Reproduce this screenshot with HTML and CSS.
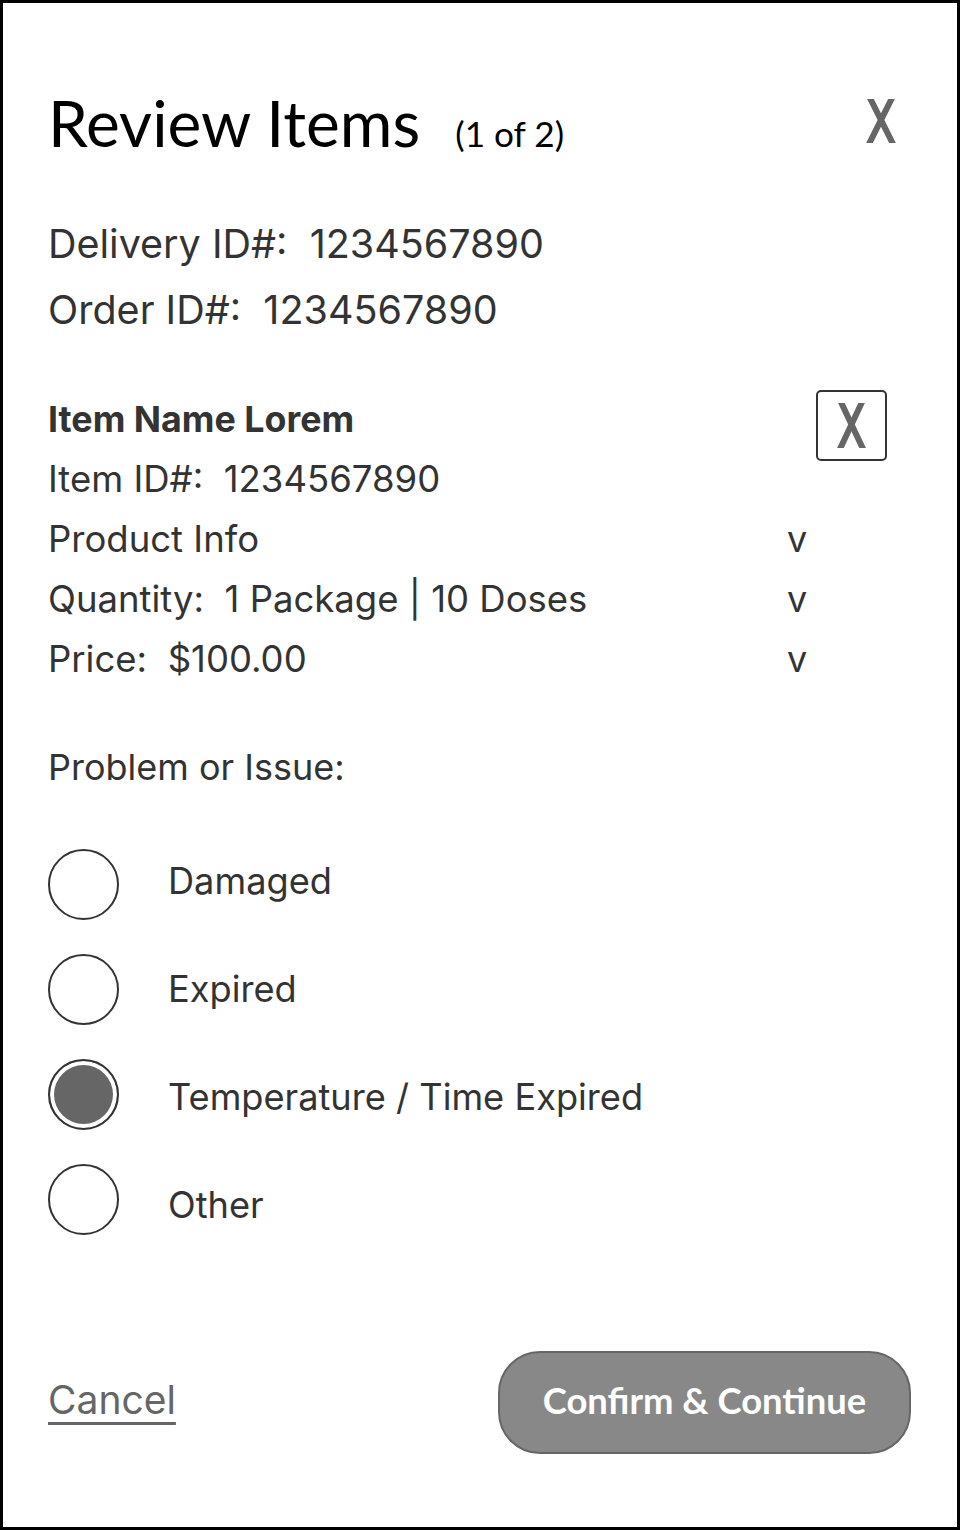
FILE: index.html
```html
<!DOCTYPE html>
<html lang="en">
<head>
<meta charset="utf-8">
<title>Review Items</title>
<link rel="stylesheet" href="styles.css">
</head>
<body>
<div class="frame">
  <header class="header">
    <h1 class="title">Review Items</h1>
    <span class="count">(1 of 2)</span>
    <button class="close" aria-label="Close">
      <svg width="30" height="44" viewBox="0 0 30 44"><g stroke="#666" stroke-width="6" fill="none"><line x1="3" y1="-3" x2="28" y2="47"/><line x1="27" y1="-3" x2="2" y2="47"/></g></svg>
    </button>
  </header>

  <section class="ids">
    <div class="id-line">Delivery ID#:&nbsp; 1234567890</div>
    <div class="id-line">Order ID#:&nbsp; 1234567890</div>
  </section>

  <section class="item">
    <div class="row name-row">
      <span class="item-name">Item Name Lorem</span>
      <button class="remove" aria-label="Remove item">
        <svg width="29" height="45" viewBox="0 0 29 45"><g stroke="#666" stroke-width="6" fill="none"><line x1="3" y1="-3" x2="27" y2="48"/><line x1="26" y1="-3" x2="2" y2="48"/></g></svg>
      </button>
    </div>
    <div class="row">Item ID#:&nbsp; 1234567890</div>
    <div class="row detail"><span>Product Info</span><span class="chev">v</span></div>
    <div class="row detail"><span>Quantity:&nbsp; 1 Package | 10 Doses</span><span class="chev">v</span></div>
    <div class="row detail"><span>Price:&nbsp; $100.00</span><span class="chev">v</span></div>
  </section>

  <div class="problem">Problem or Issue:</div>

  <ul class="options">
    <li class="option"><span class="radio"></span><span class="label">Damaged</span></li>
    <li class="option"><span class="radio"></span><span class="label">Expired</span></li>
    <li class="option"><span class="radio checked"></span><span class="label">Temperature / Time Expired</span></li>
    <li class="option"><span class="radio"></span><span class="label">Other</span></li>
  </ul>

  <footer class="footer">
    <a class="cancel" href="#">Cancel</a>
    <button class="confirm">Confirm &amp; Continue</button>
  </footer>
</div>
</body>
</html>
```

FILE: styles.css
```css
* { box-sizing: border-box; }

html, body {
  margin: 0;
  padding: 0;
  background: #fff;
}

.frame {
  width: 960px;
  height: 1530px;
  border: 3px solid #000;
  padding: 0 45px;
  font-family: "Inter", "Noto Sans", sans-serif;
  color: #333;
  display: flex;
  flex-direction: column;
}

.header {
  display: flex;
  align-items: baseline;
  margin-top: 83px;
  height: 74px;
}

.title {
  margin: 0;
  font-family: "Lato", sans-serif;
  font-weight: 400;
  font-size: 64px;
  line-height: 74px;
  color: #000;
}

.count {
  font-family: "Lato", sans-serif;
  font-size: 35.2px;
  color: #000;
  margin-left: 35px;
}

.close {
  margin-left: auto;
  margin-right: 16px;
  align-self: flex-start;
  margin-top: 13px;
  padding: 0;
  border: 0;
  background: none;
  display: block;
  height: 44px;
}
.close svg { display: block; }

.ids {
  margin-top: 51px;
}

.id-line {
  font-size: 39.5px;
  line-height: 66px;
  height: 66px;
}

.item {
  margin-top: 46px;
}

.row {
  font-size: 36.5px;
  line-height: 60px;
  height: 60px;
  display: flex;
  justify-content: space-between;
  width: 757px;
}

.name-row {
  width: 839px;
  align-items: flex-start;
}

.item-name {
  font-weight: 700;
  font-size: 35.8px;
}

.remove {
  width: 71px;
  height: 71px;
  margin-top: 1px;
  border: 2.5px solid #333;
  border-radius: 5px;
  background: #fff;
  padding: 0;
  display: flex;
  align-items: center;
  justify-content: center;
}
.remove svg { display: block; }

.chev {
  width: 18px;
  text-align: center;
  font-size: 36px;
}

.problem {
  margin-top: 48px;
  font-size: 36px;
  line-height: 60px;
}

.options {
  list-style: none;
  margin: 52px 0 0;
  padding: 0;
  display: flex;
  flex-direction: column;
  gap: 34px;
}

.option {
  display: flex;
  align-items: center;
  gap: 49px;
  height: 71px;
}

.radio {
  width: 71px;
  height: 71px;
  border: 2.5px solid #333;
  border-radius: 50%;
  flex: none;
  background: #fff;
}

.radio.checked {
  background: #666;
  box-shadow: inset 0 0 0 4px #fff;
}

.label {
  font-size: 36.2px;
  line-height: 44px;
  margin-top: -8px;
}

.option:nth-child(2) .label { margin-top: -2px; }
.option:nth-child(3) .label { margin-top: 4px; }
.option:nth-child(4) .label { margin-top: 10px; }

.footer {
  margin-top: 116px;
  display: flex;
  align-items: center;
  justify-content: space-between;
  padding-right: 1px;
}

.cancel {
  font-size: 39px;
  color: #666;
  text-decoration: underline;
  text-decoration-thickness: 3px;
  text-underline-offset: 8px;
  margin-top: -6px;
}

.confirm {
  width: 413px;
  height: 103px;
  border: 2.5px solid #666;
  border-radius: 42px;
  background: #888;
  color: #fff;
  font-family: "Lato", sans-serif;
  font-weight: 700;
  font-size: 36.4px;
  padding: 0 0 6px;
}
```
